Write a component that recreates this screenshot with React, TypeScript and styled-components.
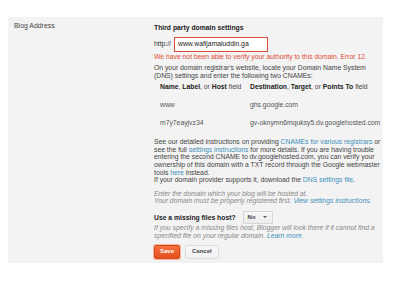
import React from "react";
import styled, { createGlobalStyle } from "styled-components";

const Global = createGlobalStyle`
  html, body { margin: 0; padding: 0; background: #ffffff; }
  body { font-family: Arial, "Liberation Sans", sans-serif; font-size: 6.8px; color: #333; }
`;

const Panel = styled.div`
  margin: 17px 17px 0 8px;
  width: 375px;
  height: 246px;
  background: #f3f3f3;
  display: grid;
  grid-template-columns: 146px 1fr;
  box-sizing: border-box;
  padding-top: 5px;
`;

const Label = styled.div`
  padding-left: 6px;
  line-height: 8px;
  color: #444;
  font-size: 6.9px;
`;

const Content = styled.div`
  display: flex;
  flex-direction: column;
  line-height: 7.6px;
`;

const Title = styled.div`
  font-weight: bold;
  color: #222;
  margin-top: 2px;
`;

const UrlRow = styled.div`
  display: flex;
  align-items: center;
  gap: 3px;
  margin-top: 5px;
`;

const Input = styled.div`
  width: 94px;
  height: 15px;
  box-sizing: border-box;
  border: 1px solid #dd4b39;
  background: #fff;
  padding: 0 3px;
  display: flex;
  align-items: center;
  color: #222;
`;

const Error = styled.div`
  color: #dd4b39;
  margin-top: 1px;
`;

const Para = styled.div<{ $mt?: number }>`
  margin-top: ${(p) => p.$mt ?? 0}px;
  color: #444;
`;

const Table = styled.div`
  display: grid;
  grid-template-columns: 90px auto;
  row-gap: 10px;
  margin: 4px 0 0 6px;
  color: #555;
`;

const Th = styled.div`
  color: #444;
`;

const Link = styled.span`
  color: #3d8fbb;
`;

const Help = styled.div<{ $mt?: number }>`
  font-style: italic;
  color: #888;
  margin-top: ${(p) => p.$mt ?? 0}px;
`;

const HostRow = styled.div`
  display: flex;
  align-items: center;
  gap: 7px;
  margin-top: 6px;
`;

const Bold = styled.span`
  font-weight: bold;
  color: #222;
`;

const Select = styled.div`
  width: 30px;
  height: 13px;
  box-sizing: border-box;
  border: 1px solid #d6d6d6;
  background: linear-gradient(#f8f8f8, #ececec);
  border-radius: 1px;
  display: flex;
  align-items: center;
  justify-content: space-between;
  padding: 0 5px 0 4px;
  font-size: 6px;
  font-weight: bold;
  color: #444;
`;

const Caret = styled.span`
  width: 0;
  height: 0;
  border-left: 2px solid transparent;
  border-right: 2px solid transparent;
  border-top: 2.5px solid #555;
`;

const Buttons = styled.div`
  display: flex;
  gap: 5px;
  margin-top: 6px;
`;

const Button = styled.div<{ $primary?: boolean }>`
  height: 14px;
  box-sizing: border-box;
  padding: 0 ${(p) => (p.$primary ? 5 : 6)}px;
  min-width: ${(p) => (p.$primary ? 24 : 30)}px;
  display: flex;
  align-items: center;
  justify-content: center;
  font-size: 6px;
  font-weight: bold;
  border-radius: 2px;
  border: 1px solid ${(p) => (p.$primary ? "#d24a1d" : "#dcdcdc")};
  background: ${(p) =>
    p.$primary ? "linear-gradient(#f6723f, #e4501e)" : "linear-gradient(#f8f8f8, #f1f1f1)"};
  color: ${(p) => (p.$primary ? "#fff" : "#444")};
  box-shadow: ${(p) => (p.$primary ? "0 0 0 1px #f7b79e" : "none")};
`;

export default function App() {
  return (
    <>
      <Global />
      <Panel>
        <Label>Blog Address</Label>
        <Content>
          <Title>Third party domain settings</Title>
          <UrlRow>
            <span>http://</span>
            <Input>www.wafijamaluddin.ga</Input>
          </UrlRow>
          <Error>We have not been able to verify your authority to this domain. Error 12.</Error>
          <Para $mt={4}>
            On your domain registrar's website, locate your Domain Name System
            <br />
            (DNS) settings and enter the following two CNAMEs:
          </Para>
          <Table>
            <Th>
              <Bold>Name</Bold>, <Bold>Label</Bold>, or <Bold>Host</Bold> field
            </Th>
            <Th>
              <Bold>Destination</Bold>, <Bold>Target</Bold>, or <Bold>Points To</Bold> field
            </Th>
            <div>www</div>
            <div>ghs.google.com</div>
            <div>m7y7eayjvz34</div>
            <div>gv-oknymn6mquksy5.dv.googlehosted.com</div>
          </Table>
          <Para $mt={12}>
            See our detailed instructions on providing <Link>CNAMEs for various registrars</Link> or
            <br />
            see the full <Link>settings instructions</Link> for more details. If you are having trouble
            <br />
            entering the second CNAME to dv.googlehosted.com, you can verify your
            <br />
            ownership of this domain with a TXT record through the Google webmaster
            <br />
            tools <Link>here</Link> instead.
            <br />
            If your domain provider supports it, download the <Link>DNS settings file</Link>.
          </Para>
          <Help $mt={6}>
            Enter the domain which your blog will be hosted at.
            <br />
            Your domain must be properly registered first. <Link>View settings instructions.</Link>
          </Help>
          <HostRow>
            <Bold>Use a missing files host?</Bold>
            <Select>
              <span>No</span>
              <Caret />
            </Select>
          </HostRow>
          <Help $mt={0}>
            If you specify a missing files host, Blogger will look there if it cannot find a
            <br />
            specified file on your regular domain. <Link>Learn more</Link>.
          </Help>
          <Buttons>
            <Button $primary>Save</Button>
            <Button>Cancel</Button>
          </Buttons>
        </Content>
      </Panel>
    </>
  );
}
